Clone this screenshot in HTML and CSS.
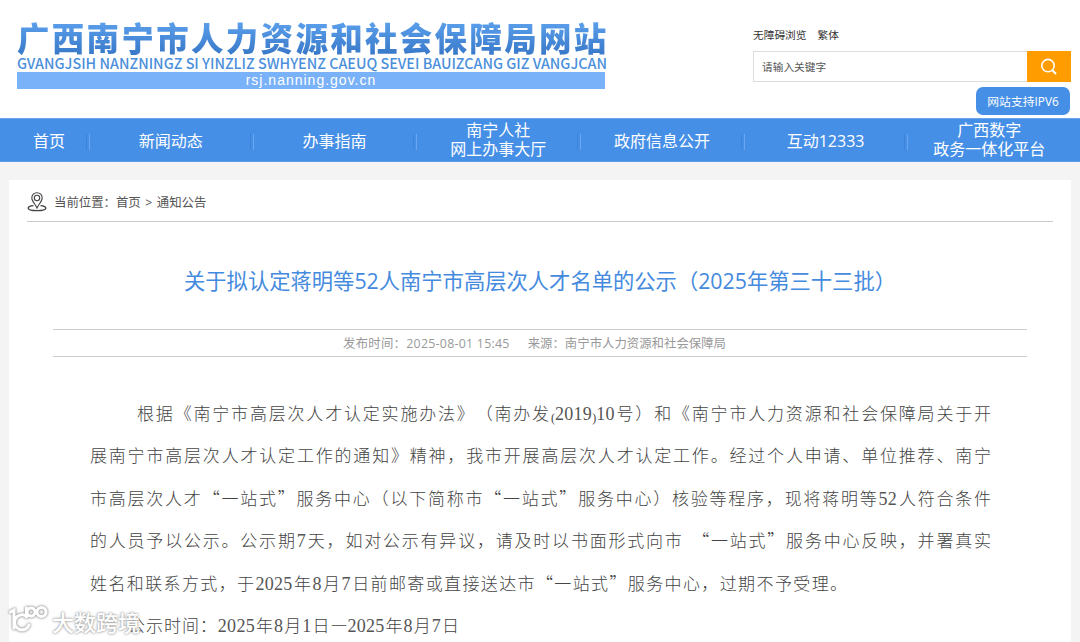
FILE: index.html
```
<!DOCTYPE html>
<html lang="zh-CN">
<head>
    <meta charset="UTF-8">
    <meta name="viewport" content="width=device-width, initial-scale=1.0">
    <title>关于拟认定蒋明等52人南宁市高层次人才名单的公示（2025年第三十三批）</title>
    <link rel="stylesheet" href="styles.css">
</head>
<body>
    <header class="header">
        <div class="logo">
            <div class="logo-cn">广西南宁市人力资源和社会保障局网站</div>
            <div class="logo-za">GVANGJSIH NANZNINGZ SI YINZLIZ SWHYENZ CAEUQ SEVEI BAUIZCANG GIZ VANGJCAN</div>
            <div class="logo-url">rsj.nanning.gov.cn</div>
        </div>
        <div class="tools">
            <div class="links"><a>无障碍浏览</a><a>繁体</a></div>
            <div class="search">
                <input type="text" placeholder="请输入关键字">
                <button aria-label="搜索">
                    <svg width="18" height="18" viewBox="0 0 18 18" fill="none" stroke="#fff" stroke-width="1.6">
                        <circle cx="8" cy="7.6" r="6.2"/>
                        <path d="M12.4 12.2L16 16" stroke-width="2"/>
                    </svg>
                </button>
            </div>
            <div class="ipv6">网站支持IPV6</div>
        </div>
    </header>

    <nav class="nav">
        <a>首页</a>
        <a>新闻动态</a>
        <a>办事指南</a>
        <a class="two">南宁人社<br>网上办事大厅</a>
        <a>政府信息公开</a>
        <a>互动12333</a>
        <a class="two">广西数字<br>政务一体化平台</a>
    </nav>

    <main class="main">
        <div class="crumb">
            <svg width="20" height="20" viewBox="0 0 20 20" fill="none" stroke="#444" stroke-width="1.1">
                <path d="M10 16C8.5 12.5 4.8 9.3 4.8 5.9a5.2 5.2 0 0 1 10.4 0C15.2 9.3 11.5 12.5 10 16z"/>
                <circle cx="10" cy="6" r="2.7"/>
                <path d="M6.5 13.6C3.5 13.8 1.2 14.8 1.2 16.2c0 1.5 3.8 2.4 8.8 2.4s8.8-.9 8.8-2.4c0-1.4-2.3-2.4-5.3-2.6" stroke-width="1.4"/>
            </svg>
            <span>当前位置：</span><a>首页</a><i>&gt;</i><a>通知公告</a>
        </div>

        <h1>关于拟认定蒋明等52人南宁市高层次人才名单的公示（2025年第三十三批）</h1>
        <div class="info"><span class="time">发布时间：2025-08-01 15:45</span><span>来源：南宁市人力资源和社会保障局</span></div>

        <article class="content">
            <p class="indent">根据《南宁市高层次人才认定实施办法》（南办发<small>(</small><b>2019</b><small>)</small><b>10</b>号）和《南宁市人力资源和社会保障局关于开</p>
            <p>展南宁市高层次人才认定工作的通知》精神，我市开展高层次人才认定工作。经过个人申请、单位推荐、南宁</p>
            <p>市高层次人才“一站式”服务中心（以下简称市“一站式”服务中心）核验等程序，现将蒋明等<b>52</b>人符合条件</p>
            <p>的人员予以公示。公示期<b>7</b>天，如对公示有异议，请及时以书面形式向市&ensp;“一站式”服务中心反映，并署真实</p>
            <p class="short">姓名和联系方式，于<b>2025</b>年<b>8</b>月<b>7</b>日前邮寄或直接送达市“一站式”服务中心，过期不予受理。</p>
            <p class="date">公示时间：<b>2025</b>年<b>8</b>月<b>1</b>日—<b>2025</b>年<b>8</b>月<b>7</b>日</p>
        </article>
    </main>

    <div class="watermark">
        <svg width="42" height="30" viewBox="0 0 42 30" fill="none" stroke="#fff" stroke-width="3" stroke-linecap="round">
            <path d="M3.5 7L7 5V23M19 11A7.5 7.5 0 1 0 22 20"/>
            <path d="M19.5 3V12"/>
            <circle cx="24" cy="7" r="4"/>
            <circle cx="34.5" cy="7" r="4.5"/>
        </svg>
        <span>大数跨境</span>
    </div>
</body>
</html>
```
FILE: styles.css
```
* {
    box-sizing: border-box;
    margin: 0;
    padding: 0;
}
body {
    width: 1080px;
    height: 642px;
    overflow: hidden;
    position: relative;
    background: #f4f4f4;
    font-family: "Open Sans", "Noto Sans CJK SC", sans-serif;
    font-size: 12px;
    color: #333;
}
.header {
    height: 118px;
    display: flex;
    justify-content: space-between;
    padding: 0 9px 0 17px;
    background: #fff;
}
.logo {
    width: 590px;
    padding-top: 20px;
    white-space: nowrap;
}
.logo-cn {
    height: 35px;
    line-height: 34px;
    font-family: "Noto Sans CJK SC", sans-serif;
    font-size: 32.5px;
    font-weight: 900;
    letter-spacing: 2.3px;
    color: transparent;
    background: linear-gradient(#5da2ee, #3878c8);
    -webkit-background-clip: text;
    background-clip: text;
}
.logo-za {
    height: 17px;
    line-height: 16px;
    font-family: "Noto Sans CJK SC", sans-serif;
    font-size: 14.35px;
    font-weight: 500;
    color: #4b8fdc;
}
.logo-url {
    width: 588px;
    height: 17px;
    line-height: 17px;
    background: #79b2f9;
    color: #fff;
    font-family: "Liberation Sans", sans-serif;
    font-size: 14px;
    letter-spacing: 1px;
    text-align: center;
}
.tools {
    width: 318px;
    display: flex;
    flex-direction: column;
    padding-top: 26px;
}
.links {
    display: flex;
    gap: 11px;
    height: 25px;
    line-height: 18px;
    font-size: 10.7px;
}
.search {
    display: flex;
    height: 31px;
}
.search input {
    width: 274px;
    border: 1px solid #ddd;
    border-right: 0;
    padding-left: 8px;
    font-family: inherit;
    font-size: 10.7px;
}
.search input::placeholder {
    color: #555;
}
.search button {
    width: 44px;
    border: 0;
    background: #ff9c00;
    display: flex;
    align-items: center;
    justify-content: center;
}
.ipv6 {
    align-self: flex-end;
    width: 94px;
    height: 28px;
    margin: 5px 1px 0 0;
    border-radius: 7px;
    background: #468fe7;
    color: #fff;
    font-size: 11.8px;
    line-height: 29px;
    text-align: center;
}
.nav {
    display: grid;
    grid-template-columns: 80px repeat(6, 163.7px);
    height: 44px;
    padding-left: 9px;
    background: #468fe7;
    border-top: 1px solid #6ba6ec;
    border-bottom: 1px solid #5b9ce9;
}
.nav a {
    display: flex;
    align-items: center;
    justify-content: center;
    position: relative;
    padding-top: 2px;
    text-align: center;
    color: #fff;
    font-size: 16px;
    line-height: 19px;
}
.nav .two {
    padding-top: 0;
}
.nav a + a::before {
    content: "";
    position: absolute;
    left: -3px;
    top: 15px;
    width: 2px;
    height: 16px;
    border-left: 1px solid #3d84d9;
    border-right: 1px solid #69a7f0;
}
.main {
    width: 1062px;
    height: 480px;
    margin: 18px auto 0;
    padding: 0 18px;
    background: #fff;
}
.crumb {
    height: 42px;
    display: flex;
    align-items: center;
    padding-top: 3px;
    border-bottom: 1px solid #ccc;
    font-size: 12.4px;
    color: #555;
}
.crumb svg {
    margin-right: 7px;
}
.crumb i {
    margin: 0 4.5px;
    font-style: normal;
}
h1 {
    height: 107px;
    padding-top: 43px;
    font-size: 21.3px;
    font-weight: 400;
    line-height: 32px;
    text-align: center;
    white-space: nowrap;
    color: #448ade;
}
.info {
    display: flex;
    justify-content: center;
    gap: 18px;
    height: 28px;
    margin: 0 26px;
    padding-right: 11px;
    border-top: 1px solid #ccc;
    border-bottom: 1px solid #ccc;
    line-height: 27px;
    font-size: 12.4px;
    color: #999;
}
.info .time {
    letter-spacing: 0.25px;
}
.content {
    width: 901px;
    margin: 34.5px 0 0 63px;
    font-family: "Noto Sans CJK SC", sans-serif;
    font-size: 17px;
    font-weight: 300;
    line-height: 42px;
    color: #444;
    text-spacing-trim: space-all;
}
.content p {
    height: 42.5px;
    white-space: nowrap;
    text-align: justify;
    text-align-last: justify;
}
.content .indent {
    padding-left: 47px;
}
.content .short {
    width: 757px;
}
.content .date {
    width: 331px;
    margin-left: 38px;
}
.content b {
    font-family: "Liberation Serif", serif;
    font-size: 18px;
    font-weight: 400;
    letter-spacing: 0.3px;
    color: #555;
}
.content small {
    font-family: "Liberation Serif", serif;
    font-size: 12px;
    vertical-align: -2px;
}
.watermark {
    position: absolute;
    left: 7px;
    top: 605px;
    display: flex;
    gap: 3px;
    font-size: 22px;
    font-weight: 500;
    line-height: 34px;
    color: #fff;
    text-shadow: 0 0 2px #999, 0 0 3px #aaa;
}
.watermark svg {
    overflow: visible;
    filter: drop-shadow(0 0 1px #999) drop-shadow(0 0 1px #bbb);
}
```
